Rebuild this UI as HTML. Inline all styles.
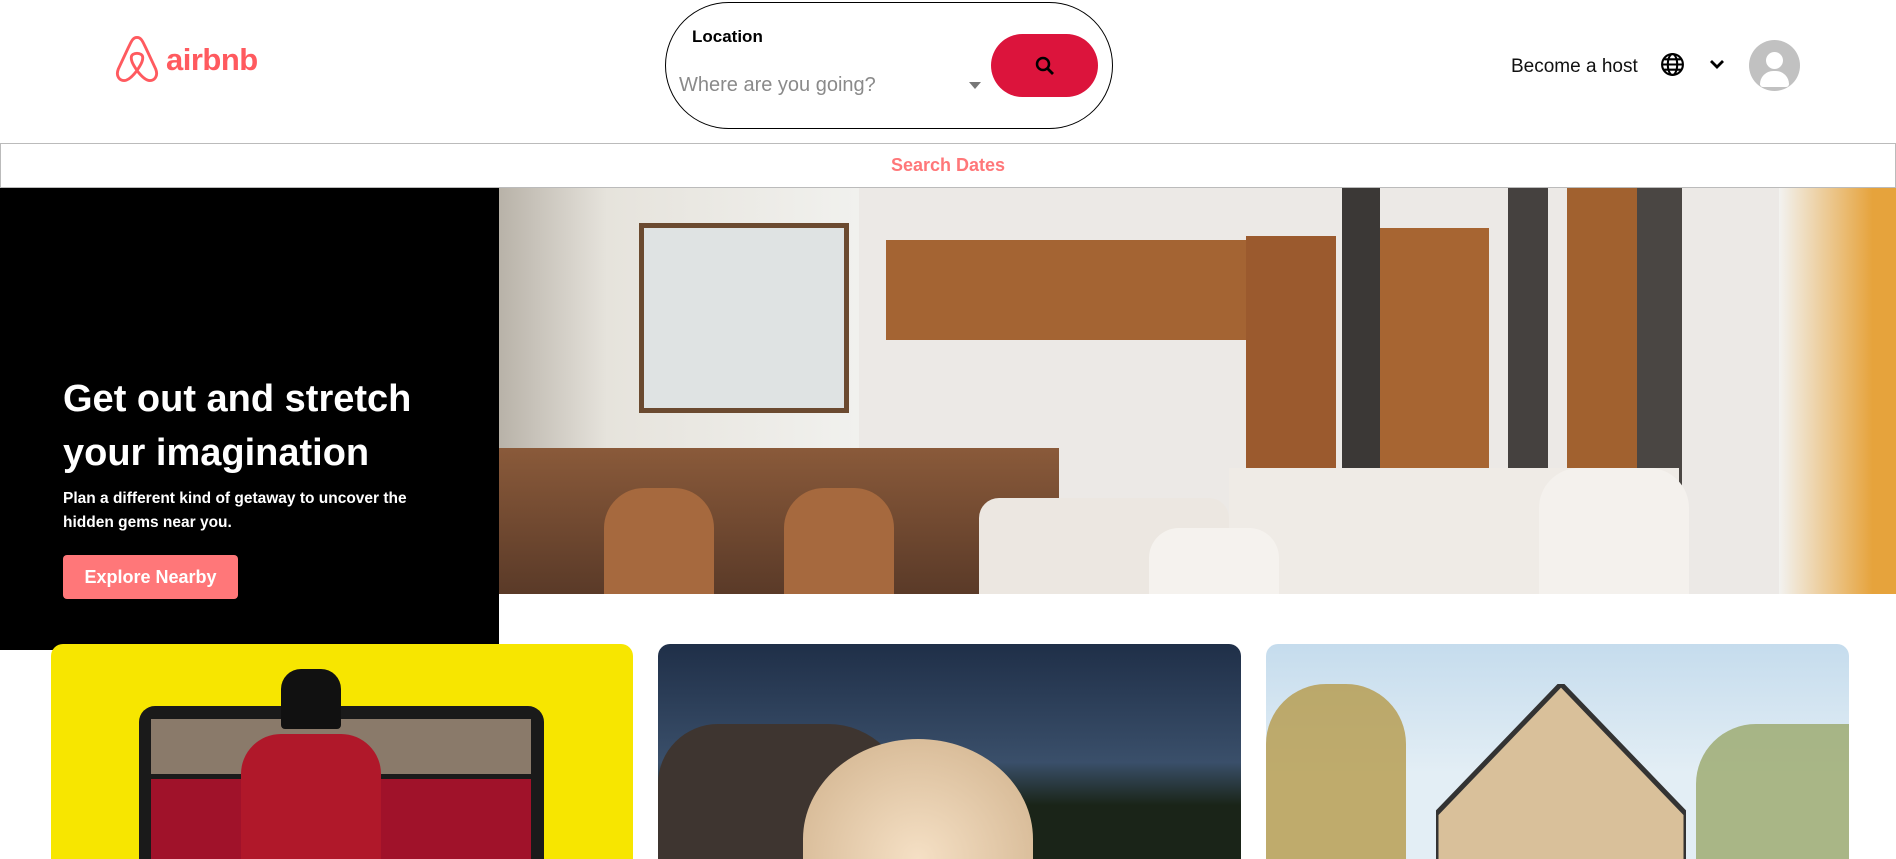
<!DOCTYPE html>
<html><head><meta charset="utf-8"><style>
*{margin:0;padding:0;box-sizing:border-box}
html,body{width:1896px;height:859px;overflow:hidden}
body{background:#fff;font-family:"Liberation Sans",sans-serif;position:relative}
.abs{position:absolute}
</style></head><body>
<div class="abs" style="left:114px;top:34px;width:150px;height:50px">
<svg width="46" height="50" viewBox="0 0 32 34" style="position:absolute;left:0;top:0"><path d="M16 2C13 2 12 5 10 9L3 24c-2 5 1 8 4 8 3 0 6-3 9-7 3 4 6 7 9 7 3 0 6-3 4-8L22 9C20 5 19 2 16 2zM16 25c-2-3-4-6-4-9 0-2 2-3 4-3s4 1 4 3c0 3-2 6-4 9z" fill="none" stroke="#ff5a5f" stroke-width="2"/></svg>
<div class="abs" style="left:52px;top:8px;font-size:31px;font-weight:bold;color:#ff5a5f;letter-spacing:-0.5px">airbnb</div>
</div>
<div class="abs" style="left:665px;top:2px;width:448px;height:127px;border:1px solid #000;border-radius:64px"></div>
<div class="abs" style="left:692px;top:27px;font-size:17px;font-weight:bold">Location</div>
<div class="abs" style="left:679px;top:74px;font-size:20px;color:#8a8a8a">Where are you going?</div>
<div class="abs" style="left:969px;top:82px;width:0;height:0;border-left:6px solid transparent;border-right:6px solid transparent;border-top:7px solid #777"></div>
<div class="abs" style="left:991px;top:34px;width:107px;height:63px;background:#dc143c;border-radius:32px"></div>
<svg class="abs" style="left:1033px;top:54px" width="24" height="24" viewBox="0 0 24 24"><circle cx="10" cy="10" r="6" fill="none" stroke="#000" stroke-width="2.5"/><path d="M14.5 14.5L20 20" stroke="#000" stroke-width="2.8"/></svg>
<div class="abs" style="left:1511px;top:56px;font-size:19px;color:#111">Become a host</div>
<svg class="abs" style="left:1660px;top:52px" width="25" height="25" viewBox="0 0 24 24" fill="none" stroke="#000" stroke-width="2"><circle cx="12" cy="12" r="10"/><ellipse cx="12" cy="12" rx="4.5" ry="10"/><path d="M2 12h20M4 7h16M4 17h16"/></svg>
<svg class="abs" style="left:1708px;top:58px" width="18" height="14" viewBox="0 0 18 14"><path d="M3 3l6 6 6-6" fill="none" stroke="#000" stroke-width="2.8"/></svg>
<div class="abs" style="left:1749px;top:40px;width:51px;height:51px;border-radius:50%;background:#c1c1c1;overflow:hidden">
<div class="abs" style="left:17px;top:12px;width:17px;height:17px;border-radius:50%;background:#fff"></div>
<div class="abs" style="left:11px;top:31px;width:29px;height:16px;border-radius:14px 14px 3px 3px;background:#fff"></div>
</div>
<div class="abs" style="left:0;top:143px;width:1896px;height:45px;border:1px solid #bbb;text-align:center;line-height:43px;font-size:18px;font-weight:bold;color:#ff7779">Search Dates</div>
<div class="abs" style="left:499px;top:188px;width:1397px;height:406px;overflow:hidden;background:#ece9e6">
<div class="abs" style="left:0;top:0;width:360px;height:406px;background:linear-gradient(90deg,#b8b2a8,#e6e3dc 30%,#f1f1ee)"></div>
<div class="abs" style="left:140px;top:35px;width:210px;height:190px;background:#dfe3e3;border:5px solid #6b4a30"></div>
<div class="abs" style="left:387px;top:52px;width:360px;height:100px;background:#a46433"></div>
<div class="abs" style="left:747px;top:48px;width:90px;height:290px;background:#9b5a2e"></div>
<div class="abs" style="left:880px;top:40px;width:110px;height:300px;background:#a76532"></div>
<div class="abs" style="left:843px;top:0;width:38px;height:406px;background:#3b3836"></div>
<div class="abs" style="left:1009px;top:0;width:40px;height:406px;background:#45413f"></div>
<div class="abs" style="left:1135px;top:0;width:48px;height:406px;background:#4a4643"></div>
<div class="abs" style="left:1068px;top:0;width:70px;height:300px;background:#a1612f"></div>
<div class="abs" style="left:1280px;top:0;width:117px;height:406px;background:linear-gradient(90deg,#f2f2f0,#e6a33c 80%)"></div>
<div class="abs" style="left:0;top:260px;width:560px;height:146px;background:linear-gradient(180deg,#8a5a3a,#5a3a28)"></div>
<div class="abs" style="left:105px;top:300px;width:110px;height:106px;background:#a6693e;border-radius:40px 40px 0 0"></div>
<div class="abs" style="left:285px;top:300px;width:110px;height:106px;background:#a6693e;border-radius:40px 40px 0 0"></div>
<div class="abs" style="left:480px;top:310px;width:250px;height:96px;background:#ece7e1;border-radius:20px 20px 0 0"></div>
<div class="abs" style="left:730px;top:280px;width:450px;height:126px;background:#efebe6"></div>
<div class="abs" style="left:650px;top:340px;width:130px;height:66px;background:#f5f2ee;border-radius:30px 30px 0 0"></div>
<div class="abs" style="left:1040px;top:280px;width:150px;height:126px;background:#f4f1ed;border-radius:40px 40px 0 0"></div>
</div>
<div class="abs" style="left:0;top:188px;width:499px;height:462px;background:#000"></div>
<div class="abs" style="left:63px;top:372px;width:420px;font-size:38px;font-weight:bold;color:#fff;line-height:54px">Get out and stretch your imagination</div>
<div class="abs" style="left:63px;top:487px;width:380px;font-size:15.5px;font-weight:bold;color:#fff;line-height:24px">Plan a different kind of getaway to uncover the hidden gems near you.</div>
<div class="abs" style="left:63px;top:555px;width:175px;height:44px;background:#ff7779;border-radius:4px;color:#fff;font-weight:bold;font-size:18px;text-align:center;line-height:44px">Explore Nearby</div>
<div class="abs" style="left:51px;top:644px;width:582px;height:215px;border-radius:12px 12px 0 0;overflow:hidden;background:#f7e600">
<div class="abs" style="left:88px;top:62px;width:405px;height:200px;background:#1a1a1a;border-radius:16px"></div>
<div class="abs" style="left:100px;top:75px;width:380px;height:55px;background:#8a7a6a"></div>
<div class="abs" style="left:100px;top:135px;width:380px;height:120px;background:#a0122a"></div>
<div class="abs" style="left:230px;top:25px;width:60px;height:60px;background:#111;border-radius:20px 20px 4px 4px"></div>
<div class="abs" style="left:190px;top:90px;width:140px;height:150px;background:#b0182a;border-radius:40px 40px 0 0"></div>
</div>
<div class="abs" style="left:658px;top:644px;width:583px;height:215px;border-radius:12px 12px 0 0;overflow:hidden;background:linear-gradient(180deg,#1f2f48,#3a4f6a 55%,#1a2418 75%)">
<div class="abs" style="left:0;top:80px;width:250px;height:150px;background:#3e3530;border-radius:60px 80px 0 0"></div>
<div class="abs" style="left:145px;top:95px;width:230px;height:200px;background:radial-gradient(circle at 50% 60%,#f5e0c5,#cfb08a);border-radius:50% 50% 0 0"></div>
</div>
<div class="abs" style="left:1266px;top:644px;width:583px;height:215px;border-radius:12px 12px 0 0;overflow:hidden;background:linear-gradient(180deg,#c5dced,#e3eef5 60%)">
<div class="abs" style="left:0;top:40px;width:140px;height:190px;background:#b59a4a;border-radius:60px 60px 0 0;opacity:.8"></div>
<div class="abs" style="left:430px;top:80px;width:153px;height:150px;background:#9aa86a;border-radius:60px 0 0 0;opacity:.8"></div>
<svg class="abs" style="left:170px;top:40px" width="250" height="190"><polygon points="125,0 250,130 250,190 0,190 0,130" fill="#d9c09a" stroke="#333" stroke-width="5"/></svg>
</div>
</body></html>
